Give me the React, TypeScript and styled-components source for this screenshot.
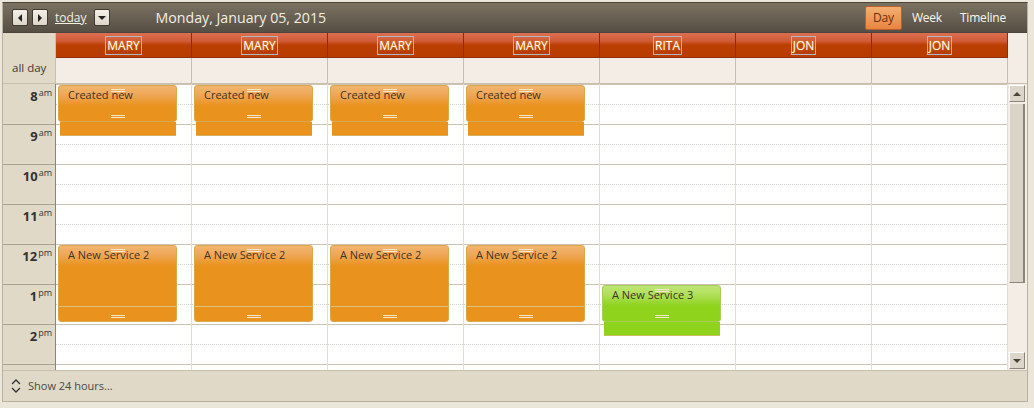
import * as React from "react";
import styled, { createGlobalStyle } from "styled-components";

const GlobalStyle = createGlobalStyle`
  html, body {
    margin: 0;
    padding: 0;
    background: #ebe6da;
    font-family: "Open Sans", "Noto Sans", "Liberation Sans", sans-serif;
  }
`;

const HOUR = 40;
const COL_W = 136;

const Frame = styled.div`
  margin: 2px 0 0 2px;
  width: 1024px;
  border: 1px solid #b8b0a0;
  border-top-color: #4a4438;
  background: #f3ede5;
`;

const Toolbar = styled.div`
  height: 30px;
  display: flex;
  align-items: center;
  padding: 0 13px 0 9px;
  background: linear-gradient(#7b7262, #554e43);
  border-bottom: 1px solid #4a443a;
  box-sizing: border-box;
`;

const NavButton = styled.button`
  width: 16px;
  height: 17px;
  margin-right: 4px;
  padding: 0;
  display: flex;
  align-items: center;
  justify-content: center;
  background: linear-gradient(#f4f0e8, #ddd6c8);
  border: 1px solid #3f3a32;
  border-radius: 2px;
`;

const TodayLink = styled.a`
  color: #f4f0e4;
  font-size: 12px;
  text-decoration: underline;
  margin: 0 7px 0 3px;
`;

const Title = styled.div`
  color: #f2eee2;
  font-size: 14.2px;
  margin-left: 42px;
  flex: 1;
`;

const ViewButton = styled.div<{ $active?: boolean }>`
  height: 22px;
  line-height: 22px;
  padding: 0 7px;
  margin-left: 2px;
  font-size: 12px;
  letter-spacing: -0.2px;
  border-radius: 2px;
  color: ${p => (p.$active ? "#6a3010" : "#fbf8f0")};
  background: ${p => (p.$active ? "linear-gradient(#f3ae70, #e88540)" : "transparent")};
  border: 1px solid ${p => (p.$active ? "#b86030" : "transparent")};
`;

const HeaderRow = styled.div`
  display: flex;
  height: 25px;
`;

const Corner = styled.div`
  width: 53px;
  background: #e0d9c7;
  border-right: 1px solid #c8bfae;
  box-sizing: border-box;
`;

const ResourceCell = styled.div`
  width: ${COL_W}px;
  box-sizing: border-box;
  display: flex;
  align-items: center;
  justify-content: center;
  background: linear-gradient(#dc6f52 0%, #cf5a34 35%, #bb3f02 50%, #b83c00 100%);
  border-right: 1px solid #8e2e08;
  border-bottom: 1px solid #8e2e08;
`;

const ResourceName = styled.span`
  color: #fff;
  font-size: 12px;
  line-height: 17px;
  padding: 0 1px;
  border: 1px solid #aebbc4;
  text-shadow: 0 0 2px #f0a020;
`;

const HeaderFiller = styled.div`
  flex: 1;
  background: #f3ede5;
`;

const AllDayRow = styled.div`
  display: flex;
  height: 26px;
  border-bottom: 1px solid #c8bfae;
  box-sizing: border-box;
`;

const AllDayLabel = styled.div`
  width: 53px;
  box-sizing: border-box;
  background: #e0d9c7;
  border-right: 1px solid #c8bfae;
  font-size: 11.5px;
  color: #3a3a3a;
  padding: 2px 0 0 9px;
`;

const AllDayCell = styled.div`
  width: ${COL_W}px;
  box-sizing: border-box;
  border-right: 1px solid #c8bfae;
  background: #f3ede5;
`;

const Body = styled.div`
  display: flex;
  height: 286px;
  overflow: hidden;
`;

const Gutter = styled.div`
  width: 53px;
  box-sizing: border-box;
  background: #e0d9c7;
  border-right: 1px solid #8a847a;
`;

const GutterSlot = styled.div`
  height: ${HOUR}px;
  box-sizing: border-box;
  border-top: 1px solid #a8a090;
  text-align: right;
  padding: 0 3px 0 0;
  line-height: 15px;
  color: #333;
  &:first-child {
    border-top-color: transparent;
  }
`;

const HourNum = styled.span`
  font-size: 13px;
  font-weight: 700;
`;

const Meridiem = styled.sup`
  font-size: 9px;
  font-weight: 400;
  vertical-align: 5px;
  margin-left: 1px;
`;

const Column = styled.div`
  position: relative;
  width: ${COL_W}px;
  box-sizing: border-box;
  border-right: 1px solid #e8dccb;
  background: #fff;
`;

const HalfSlot = styled.div<{ $dotted?: boolean }>`
  height: 20px;
  box-sizing: border-box;
  border-top: 1px ${p => (p.$dotted ? "dotted #d4d0cc" : "solid #cdc3b5")};
`;

const EventBox = styled.div<{ $top: number; $height: number }>`
  position: absolute;
  left: 2px;
  top: ${p => p.$top}px;
  width: 119px;
  height: ${p => p.$height}px;
`;

const Card = styled.div<{ $green?: boolean; $height: number }>`
  position: relative;
  height: ${p => p.$height}px;
  box-sizing: border-box;
  border-radius: 3px;
  border: 1px solid ${p => (p.$green ? "#a8cc58" : "#d9a84c")};
  background: ${p =>
    p.$green
      ? "linear-gradient(#bde673 0px, #b2e05e 8px, #8fd31c 20px, #8fd31c 100%)"
      : "linear-gradient(#f2b46e 0px, #efa95a 8px, #ea921e 20px, #ea921e 100%)"};
  font-size: 11px;
  color: #3c3428;
  padding: 1px 0 0 9px;
`;

const Tail = styled.div<{ $green?: boolean; $height: number }>`
  margin: 0 1px 0 2px;
  height: ${p => p.$height}px;
  box-sizing: border-box;
  background: ${p => (p.$green ? "#8fd31c" : "#ea921e")};
  border-bottom: 1px solid ${p => (p.$green ? "#c8c060" : "#d8b060")};
`;

const Divider = styled.div`
  position: absolute;
  left: 0;
  right: 0;
  height: 1px;
  background: #d8c080;
`;

const Grip = styled.div<{ $top?: boolean }>`
  position: absolute;
  left: 52px;
  width: 14px;
  height: 3px;
  border-top: 1px solid #f6e8d0;
  border-bottom: 1px solid #f6e8d0;
  box-sizing: border-box;
  ${p => (p.$top ? "top: 3px;" : "bottom: 3px;")}
`;

const Scrollbar = styled.div`
  width: 19px;
  display: flex;
  flex-direction: column;
  background: #f3ede5;
  padding: 1px 2px 1px 1px;
  box-sizing: border-box;
`;

const ScrollButton = styled.div`
  height: 15px;
  display: flex;
  align-items: center;
  justify-content: center;
  background: #dcd5ca;
  border-top: 1px solid #fff;
  border-left: 1px solid #fff;
  border-right: 1px solid #8a847a;
  border-bottom: 1px solid #8a847a;
`;

const Thumb = styled.div`
  height: 178px;
  margin-top: 2px;
  background: #dad3c8;
  border-left: 1px solid #f4f0ea;
  border-right: 2px solid #8a847a;
  border-bottom: 1px solid #8a847a;
`;

const Track = styled.div`
  flex: 1;
`;

const Footer = styled.div`
  height: 31px;
  display: flex;
  align-items: center;
  padding-left: 8px;
  background: #e0d9c7;
  border-top: 1px solid #c8bfae;
  box-sizing: border-box;
  font-size: 11px;
  color: #4a4a4a;
`;

const FooterText = styled.span`
  margin-left: 7px;
  line-height: 16px;
`;

const Triangle = ({ dir, size = 4, color = "#222" }: { dir: "l" | "r" | "u" | "d"; size?: number; color?: string }) => {
  const s = size;
  const pts =
    dir === "l"
      ? `${s},0 ${s},${s * 2} 0,${s}`
      : dir === "r"
      ? `0,0 0,${s * 2} ${s},${s}`
      : dir === "u"
      ? `0,${s} ${s * 2},${s} ${s},0`
      : `0,0 ${s * 2},0 ${s},${s}`;
  const w = dir === "l" || dir === "r" ? s : s * 2;
  const h = dir === "l" || dir === "r" ? s * 2 : s;
  return (
    <svg width={w} height={h}>
      <polygon points={pts} fill={color} />
    </svg>
  );
};

const resources = ["MARY", "MARY", "MARY", "MARY", "RITA", "JON", "JON"];
const hours = [
  ["8", "am"],
  ["9", "am"],
  ["10", "am"],
  ["11", "am"],
  ["12", "pm"],
  ["1", "pm"],
  ["2", "pm"],
  ["3", "pm"],
];

type Ev = { col: number; title: string; top: number; card: number; tail: number; green?: boolean; divider?: number };

const events: Ev[] = [
  ...[0, 1, 2, 3].map(c => ({ col: c, title: "Created new", top: 1, card: 37, tail: 14 })),
  ...[0, 1, 2, 3].map(c => ({ col: c, title: "A New Service 2", top: 161, card: 77, tail: 0, divider: 60 })),
  { col: 4, title: "A New Service 3", top: 201, card: 37, tail: 14, green: true },
];

export default function App() {
  return (
    <>
      <GlobalStyle />
      <Frame>
        <Toolbar>
          <NavButton>
            <Triangle dir="l" />
          </NavButton>
          <NavButton>
            <Triangle dir="r" />
          </NavButton>
          <TodayLink>today</TodayLink>
          <NavButton>
            <Triangle dir="d" />
          </NavButton>
          <Title>Monday, January 05, 2015</Title>
          <ViewButton $active>Day</ViewButton>
          <ViewButton>Week</ViewButton>
          <ViewButton>Timeline</ViewButton>
        </Toolbar>
        <HeaderRow>
          <Corner />
          {resources.map((r, i) => (
            <ResourceCell key={i}>
              <ResourceName>{r}</ResourceName>
            </ResourceCell>
          ))}
          <HeaderFiller />
        </HeaderRow>
        <AllDayRow>
          <AllDayLabel>all day</AllDayLabel>
          {resources.map((_, i) => (
            <AllDayCell key={i} />
          ))}
        </AllDayRow>
        <Body>
          <Gutter>
            {hours.map(([n, m]) => (
              <GutterSlot key={n + m}>
                <HourNum>{n}</HourNum>
                <Meridiem>{m}</Meridiem>
              </GutterSlot>
            ))}
          </Gutter>
          {resources.map((_, ci) => (
            <Column key={ci}>
              {hours.map(([n, m]) => (
                <React.Fragment key={n + m}>
                  <HalfSlot />
                  <HalfSlot $dotted />
                </React.Fragment>
              ))}
              {events
                .filter(e => e.col === ci)
                .map((e, k) => (
                  <EventBox key={k} $top={e.top} $height={e.card + e.tail}>
                    <Card $green={e.green} $height={e.card}>
                      <Grip $top />
                      {e.title}
                      {e.divider && <Divider style={{ top: e.divider }} />}
                      <Grip />
                    </Card>
                    {e.tail > 0 && <Tail $green={e.green} $height={e.tail} />}
                  </EventBox>
                ))}
            </Column>
          ))}
          <Scrollbar>
            <ScrollButton>
              <Triangle dir="u" color="#4a4438" />
            </ScrollButton>
            <Thumb />
            <Track />
            <ScrollButton>
              <Triangle dir="d" color="#4a4438" />
            </ScrollButton>
          </Scrollbar>
        </Body>
        <Footer>
          <svg width="10" height="14" viewBox="0 0 10 14" fill="none" stroke="#333" strokeWidth="1.3">
            <polyline points="1,5 5,1 9,5" />
            <polyline points="1,9 5,13 9,9" />
          </svg>
          <FooterText>Show 24 hours...</FooterText>
        </Footer>
      </Frame>
    </>
  );
}
